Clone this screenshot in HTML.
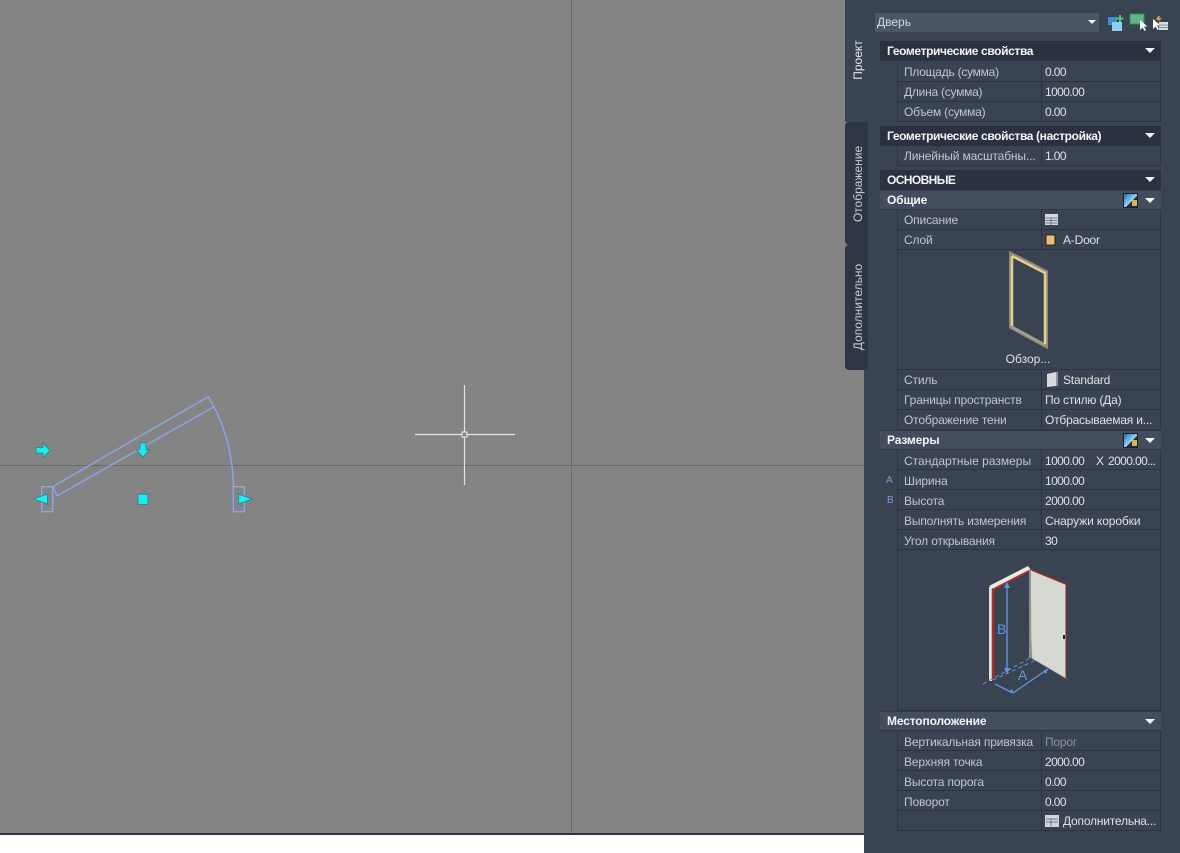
<!DOCTYPE html>
<html lang="ru"><head><meta charset="utf-8"><title>Дверь</title>
<style>
html,body{margin:0;padding:0;background:#fff}
#r{position:relative;width:1180px;height:853px;overflow:hidden;background:#fff;font:12px "Liberation Sans",sans-serif;filter:blur(.3px)}
#r div{position:absolute;box-sizing:border-box}
.cv{left:0;top:0;width:864px;height:833px;background:#848484}
.panel{left:864px;top:0;width:316px;height:853px;background:#3a4351}
.tab{width:23px;left:845px;border-radius:4px 0 0 4px}
.tt{color:#c9ccd1;white-space:nowrap;transform:translate(-50%,-50%) rotate(-90deg);font-size:12px}
.h{left:880px;width:281px;height:20px;background:#2b313e;color:#f4f5f6;font-weight:bold;line-height:20px;padding-left:7px;font-size:12px;letter-spacing:-.37px}
.s{background:#434d5e;border-top:1px solid #333a48;border-bottom:1px solid #2f3644;line-height:18.500px;letter-spacing:-.15px}
.rw{left:897px;width:264px;height:20px;border-bottom:1px solid #2d3441;border-left:1px solid #2d3441;border-right:1px solid #2d3441;line-height:20px;color:#c2c6cc;padding-left:6px;white-space:nowrap;letter-spacing:-.15px}
.d{line-height:22px}
.rw span{position:absolute;left:143px;top:0;height:19px;border-left:1px solid #2d3441;padding-left:3px;color:#dfe2e5;letter-spacing:-.2px}
.rw span.n{letter-spacing:-.6px}
.ch{width:0;height:0;border-left:5px solid transparent;border-right:5px solid transparent;border-top:5px solid #f2f3f4}
.ib{left:1123px;width:15px;height:15px;background:linear-gradient(135deg,#2a7fc0 10%,#9fd4ee 55%,#1d2a3a 60%);border:1px solid #1a2230}
.gold{width:5px;height:6px;background:#d7b45a}
</style></head><body>
<div id="r">
<div class="cv"></div>
<div style="left:0;top:833px;width:864px;height:2px;background:#2d3340"></div>
<div class="panel"></div>
<div style="left:845px;top:0;width:23px;height:122px;background:#3a4351"></div>
<div class="tab" style="top:122px;height:123px;background:#2f3643"></div>
<div class="tab" style="top:245px;height:125px;background:#2f3643"></div>
<div class="tt" style="left:858px;top:60px;color:#e6e8ea">Проект</div>
<div class="tt" style="left:858px;top:184px">Отображение</div>
<div class="tt" style="left:858px;top:307px">Дополнительно</div>

<div style="left:875px;top:13px;width:224px;height:19px;background:#4a5566;color:#d8dade;line-height:19px;padding-left:2px">Дверь</div>
<div class="ch" style="left:1088px;top:20px;border-left-width:4px;border-right-width:4px;border-top-width:4px"></div>

<svg style="position:absolute;left:1105px;top:10px" width="70" height="24" viewBox="1105 10 70 24">
<rect x="1108" y="17" width="9" height="8" fill="#3f8fc9"/><rect x="1112" y="22" width="10" height="9" fill="#8fcdf0"/>
<path d="M1120 15v7M1116.500 18.500h7" stroke="#3dd07a" stroke-width="2"/>
<rect x="1130" y="14" width="14" height="10" fill="#5fb585" stroke="#2f8f5f"/>
<path d="M1140 20l0 10 2.500-2.500 2 3.500 1.500-1-2-3.500 3.500 0z" fill="#fff"/>
<path d="M1153 19l0 10 2.500-2.500 2 3.500 1.500-1-2-3.500 3.500 0z" fill="#fff"/>
<rect x="1159" y="22" width="9" height="8" fill="#d8dde2"/><path d="M1159 25h9M1159 27.500h9" stroke="#8a93a0"/>
<path d="M1158 16l-2 4 3 0-1 2 4-4-3 0 1-2z" fill="#e0a040"/>
</svg>

<div class="h" style="top:41px;line-height:21px">Геометрические свойства</div>
<div class="rw" style="top:62px;letter-spacing:-.25px">Площадь (сумма)<span class="n">0.00</span></div>
<div class="rw" style="top:82px;letter-spacing:-.25px">Длина (сумма)<span class="n">1000.00</span></div>
<div class="rw" style="top:102px;letter-spacing:-.25px">Объем (сумма)<span class="n">0.00</span></div>
<div class="h" style="top:126px">Геометрические свойства (настройка)</div>
<div class="rw" style="top:146px">Линейный масштабны...<span class="n">1.00</span></div>
<div class="h" style="top:170px;letter-spacing:-.6px">ОСНОВНЫЕ</div>
<div class="h s" style="top:190px">Общие</div>
<div class="rw" style="top:210px">Описание<span></span></div>
<div class="rw" style="top:230px">Слой<span style="padding-left:21px">A-Door</span></div>
<div class="rw" style="top:250px;height:120px"></div>
<div style="left:897px;top:352px;width:264px;text-align:center;color:#dfe2e5;line-height:14px;padding-right:2px">Обзор...</div>
<div class="rw" style="top:370px">Стиль<span style="padding-left:21px">Standard</span></div>
<div class="rw" style="top:390px">Границы пространств<span>По стилю (Да)</span></div>
<div class="rw" style="top:410px">Отображение тени<span>Отбрасываемая и...</span></div>
<div class="h s" style="top:430px">Размеры</div>
<div class="rw d" style="top:450px;letter-spacing:0">Стандартные размеры<span class="n">1000.00<b style="position:absolute;left:54px;font-weight:normal">X</b><b style="position:absolute;left:66px;font-weight:normal">2000.00...</b></span></div>
<div class="rw d" style="top:470px">Ширина<span class="n">1000.00</span></div>
<div class="rw d" style="top:490px">Высота<span class="n">2000.00</span></div>
<div class="rw d" style="top:510px">Выполнять измерения<span style="letter-spacing:-.1px">Снаружи коробки</span></div>
<div class="rw d" style="top:530px">Угол открывания<span class="n">30</span></div>
<div class="rw" style="top:550px;height:161px"></div>
<div class="h s" style="top:711px">Местоположение</div>
<div class="rw d" style="top:731px">Вертикальная привязка<span style="color:#8b919b">Порог</span></div>
<div class="rw d" style="top:751px">Верхняя точка<span class="n">2000.00</span></div>
<div class="rw d" style="top:771px">Высота порога<span class="n">0.00</span></div>
<div class="rw d" style="top:791px">Поворот<span class="n">0.00</span></div>
<div class="rw" style="top:811px"><span style="padding-left:21px">Дополнительна...</span></div>
<div style="left:886px;top:475px;color:#6f9fdc;font-size:10px;line-height:12px">A</div>
<div style="left:887px;top:495px;color:#6f9fdc;font-size:10px;line-height:12px">B</div>

<div class="ch" style="left:1145px;top:48px"></div>
<div class="ch" style="left:1145px;top:133px"></div>
<div class="ch" style="left:1145px;top:177px"></div>
<div class="ch" style="left:1145px;top:198px"></div>
<div class="ch" style="left:1145px;top:438px"></div>
<div class="ch" style="left:1145px;top:719px"></div>
<div class="ib" style="top:193px"></div><div class="gold" style="left:1132px;top:200px"></div>
<div class="ib" style="top:433px"></div><div class="gold" style="left:1132px;top:440px"></div>

<svg style="position:absolute;left:0;top:0" width="1180" height="853" viewBox="0 0 1180 853">
<!-- canvas axes -->
<path d="M0 465.500H864M571.500 0V833" stroke="#6c6c6c" fill="none"/>
<!-- crosshair -->
<path d="M415 434.500H515M464.500 385V485" stroke="#e2e2e2" stroke-width="1.200" fill="none"/>
<rect x="462" y="432" width="5" height="5" fill="#848484" stroke="#f0f0f0"/>
<!-- door plan -->
<g fill="none" stroke="#8fa3ea" stroke-width="1.400">
<rect x="41.700" y="486.700" width="11" height="25"/>
<rect x="233.300" y="486.700" width="11" height="25"/>
<path d="M52.700 486.700L208.300 396.700L214 406.700L57.300 495.700Z"/>
<path d="M214 406.700A180.600 180.600 0 0 1 233.300 486.700"/>
</g>
<!-- grips -->
<g fill="#19eef0" stroke="#2f7f84" stroke-width=".8">
<path d="M36 447.500h7v-4.500l7 7.500-7 7v-4.500H36z"/>
<path d="M140 443h6v7h3.500l-6.500 7-6.500-7H140z"/>
<path d="M33.500 499L47.500 494V504z"/>
<path d="M252.500 499L238.500 494V504z"/>
<rect x="138" y="494.300" width="10" height="10"/>
</g>
<!-- description icon -->
<g><rect x="1045" y="214" width="13" height="11" fill="#d6dade"/><path d="M1045.500 218h12M1045.500 220.500h12M1045.500 223h12M1051 218v7" stroke="#6f7784" fill="none"/></g>
<rect x="1046" y="235" width="9" height="10" fill="#f0bd72" stroke="#1e2430"/>
<path d="M1047 374l9-2v14l-9 1z" fill="#d8dadc"/><path d="M1056 372h2v14h-2z" fill="#8e949c"/>
<rect x="1045" y="815" width="14" height="12" fill="#d2d6da"/><path d="M1046 819h12M1046 822h12M1051 819v7" stroke="#6f7784"/>
<!-- door preview -->
<g fill="none">
<path d="M1011 254L1046 272V346L1011 327Z" stroke="#8f8b7c" stroke-width="4"/>
<path d="M1012 256L1045 273V344M1012 256V326" stroke="#e6cd8e" stroke-width="2.500"/>
<path d="M1012 327L1045 345" stroke="#a9a794" stroke-width="1.500"/>
</g>
<!-- dims preview -->
<path d="M1030 570L1066 584V678L1032 658Z" fill="#d8d8d2" stroke="#c9c9c2"/>
<path d="M1032 570L1066 584" stroke="#8e2a2a" stroke-width="1.500"/>
<path d="M1066 584V678" stroke="#8e2a2a" stroke-width="1"/>
<rect x="1063" y="635" width="2" height="4" fill="#222"/>
<path d="M989 586L1028 566L1031 570L994 589Z" fill="#ece9e4"/>
<path d="M994 589L1031 570" stroke="#a62e2e" stroke-width="2"/>
<path d="M990.500 587V681" stroke="#e4e2dc" stroke-width="3"/>
<path d="M993 589V680" stroke="#a62e2e" stroke-width="2.500"/>
<path d="M1030 570V658" stroke="#8f9090" stroke-width="2"/>
<g stroke="#5d9be0" fill="none" stroke-width="1.300">
<path d="M1007 585V672"/>
<path d="M983 684L1032 657M993 680L1036 660" stroke-dasharray="4 3" stroke="#6f93c4" stroke-width="1"/>
<path d="M995 684L1013 693L1048 669"/>
</g>
<path d="M1007 582l-3 6h6zM1007 674l-3-6h6zM1013 693l-4-1 3-3zM1048 669l-5 2 3 3z" fill="#5d9be0"/>
<text x="997" y="634" font-family="Liberation Sans" font-size="14" fill="#5d9be0">B</text>
<text x="1018" y="680" font-family="Liberation Sans" font-size="14" fill="#5d9be0">A</text>
</svg>
</div>
</body></html>
